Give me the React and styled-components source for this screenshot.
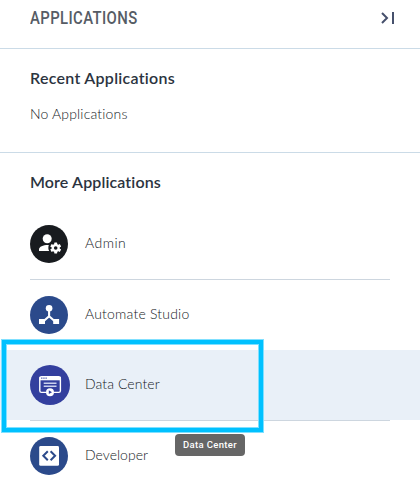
import React from 'react';
import styled, { createGlobalStyle } from 'styled-components';

const GlobalStyle = createGlobalStyle`
  * { box-sizing: border-box; }
  body { margin: 0; background: #fff; overflow: hidden; }
`;

const Panel = styled.main`
  position: relative;
  width: 420px;
  height: 490px;
  overflow: hidden;
  background: #fff;
  color: #2b3340;
  font-family: Lato, 'Noto Sans', sans-serif;
`;

const Header = styled.header`
  display: flex;
  justify-content: space-between;
  height: 49px;
  padding: 6px 24px 0 30px;
  border-bottom: 1px solid #cbdbe7;
`;

const Title = styled.h1`
  margin: 0;
  height: 24px;
  font: 500 19px/24px Roboto, sans-serif;
  letter-spacing: 0.5px;
  color: #565c65;
  white-space: nowrap;
  transform: scaleX(0.783);
  transform-origin: left;
`;

const CollapseIcon = styled.svg`
  width: 16px;
  height: 14px;
  margin-top: 5px;
`;

const RecentSection = styled.section`
  height: 104px;
  padding: 17px 30px 0;
  border-bottom: 1px solid #cbdbe7;
`;

const MoreSection = styled.section`
  padding-top: 17px;
`;

const Heading = styled.h2`
  margin: 0;
  padding: 0 ${({ $inset }) => $inset || '0'};
  font-size: 16px;
  font-weight: 600;
  line-height: 24px;
  letter-spacing: ${({ $spacing }) => $spacing};
`;

const Empty = styled.p`
  margin: 12px 0 0;
  font: 300 14px/24px Lato, sans-serif;
  letter-spacing: ${({ $spacing }) => $spacing};
  color: #141a25;
`;

const List = styled.ul`
  margin: 15px 0 0;
  padding: 0;
  list-style: none;
`;

const Row = styled.li`
  padding: 0 30px;
  background: linear-gradient(${({ $active }) => ($active ? '#e9f0f8, #e9f0f8' : '#fff, #fff')}) 0 0 / 100% 70px no-repeat;
`;

const RowContent = styled.div`
  display: grid;
  grid-template-columns: 55px 1fr;
  align-items: center;
  height: ${({ $divider }) => ($divider ? '71px' : '70px')};
  border-bottom: ${({ $divider }) => ($divider ? '1px solid #cdd6df' : '0')};
`;

const AppIcon = styled.svg`
  display: block;
  width: ${({ $size }) => $size}px;
  height: ${({ $size }) => $size}px;
`;

const Label = styled.span`
  font: 300 14px/20px Lato, sans-serif;
  letter-spacing: ${({ $spacing }) => $spacing};
  color: #141a25;
  padding-bottom: 2px;
`;

const Highlight = styled.div`
  position: absolute;
  left: 2px;
  top: 340px;
  width: 261px;
  height: 92px;
  border: 4px solid #00c1ff;
  box-shadow: 0 0 0 1px #80e0ff, inset 0 0 0 1px #80e0ff;
  pointer-events: none;
`;

const Tooltip = styled.div`
  position: absolute;
  left: 175px;
  top: 434px;
  width: 70px;
  height: 22px;
  border-radius: 4px;
  background: #666;
  color: #fff;
  font: 500 9.5px/22px Roboto, sans-serif;
  letter-spacing: 0.35px;
  text-align: center;
  white-space: nowrap;
`;

const AdminIcon = () => (
  <AppIcon $size={38} viewBox="0 0 38 38">
    <circle cx="19" cy="19" r="19" fill="#181b1f" />
    <circle cx="17.2" cy="13.7" r="4.5" fill="#fff" />
    <path d="M9 26V24.5C9 21.4 13.5 19.7 18.8 19.9C18.1 22 18.2 24.1 19.2 26Z" fill="#fff" />
    <g transform="translate(25.7 23)">
      <g fill="#fff">
        {[0, 60, 120].map((angle) => (
          <rect key={angle} x="-1.5" y="-5.5" width="3" height="11" rx="0.4" transform={`rotate(${angle})`} />
        ))}
        <circle r="4" />
      </g>
      <circle r="1.8" fill="#181b1f" />
    </g>
  </AppIcon>
);

const AutomateIcon = () => (
  <AppIcon $size={38} viewBox="0 0 38 38">
    <circle cx="19" cy="19" r="19" fill="#2b4a8b" />
    <circle cx="19.1" cy="12.2" r="3.3" fill="#fff" />
    <path d="M19.1 13V20.3L12.6 26M19.1 20.3L25.7 26" fill="none" stroke="#fff" strokeWidth="2.1" />
    <path d="M9 22.9H15V28H9ZM23.2 22.9H29.1V28H23.2Z" fill="#fff" />
  </AppIcon>
);

const DataIcon = () => (
  <AppIcon $size={40} viewBox="0 0 40 40">
    <circle cx="20" cy="20" r="20" fill="#333f9e" />
    <path d="M16.3 27.4H11.5Q9.8 27.4 9.8 25.7V13.5Q9.8 11.8 11.5 11.8H28.7Q30.4 11.8 30.4 13.5V25.7Q30.4 27.4 28.7 27.4H23.8" fill="none" stroke="#fff" strokeWidth="1.4" />
    <path d="M9.3 12H31V15.3H9.3Z" fill="#fff" />
    <path d="M11 13.2H17" stroke="#6670b8" strokeWidth="1.3" strokeDasharray="1.5 0.7" />
    <path d="M13.7 18.3H26.5M13.7 21.3H26.5" stroke="#cbd1ee" strokeWidth="1.5" />
    <circle cx="20" cy="27.2" r="4" fill="#fff" />
    <path d="M18.8 25.3L22 27.2L18.8 29.1Z" fill="#333f9e" />
  </AppIcon>
);

const DeveloperIcon = () => (
  <AppIcon $size={38} viewBox="0 0 38 38">
    <circle cx="19" cy="19" r="19" fill="#2b4a8b" />
    <rect x="9.2" y="9" width="19.8" height="19.8" rx="1.4" fill="#fff" />
    <path d="M17.8 14.2L13.3 18.7L17.8 23.2M20.6 14.2L25.1 18.7L20.6 23.2" fill="none" stroke="#2b4a8b" strokeWidth="2" />
  </AppIcon>
);

const applications = [
  { name: 'Admin', Icon: AdminIcon, spacing: '0.5px', divider: true },
  { name: 'Automate Studio', Icon: AutomateIcon, spacing: '0.2px' },
  { name: 'Data Center', Icon: DataIcon, spacing: '0.08px', divider: true, active: true },
  { name: 'Developer', Icon: DeveloperIcon, spacing: '0.03px' },
];

export default function App() {
  return (
    <Panel>
      <GlobalStyle />
      <Header>
        <Title>APPLICATIONS</Title>
        <CollapseIcon viewBox="0 0 16 14" fill="none" stroke="#46506c" strokeWidth="2">
          <path d="M2 2L7 7L2 12M13 1V13" />
        </CollapseIcon>
      </Header>
      <RecentSection>
        <Heading $spacing="0.28px">Recent Applications</Heading>
        <Empty $spacing="0.17px">No Applications</Empty>
      </RecentSection>
      <MoreSection>
        <Heading $inset="30px" $spacing="0.12px">More Applications</Heading>
        <List>
          {applications.map(({ name, Icon, spacing, divider, active }) => (
            <Row key={name} $active={active}>
              <RowContent $divider={divider}>
                <Icon />
                <Label $spacing={spacing}>{name}</Label>
              </RowContent>
            </Row>
          ))}
        </List>
      </MoreSection>
      <Highlight />
      <Tooltip role="tooltip">Data Center</Tooltip>
    </Panel>
  );
}
